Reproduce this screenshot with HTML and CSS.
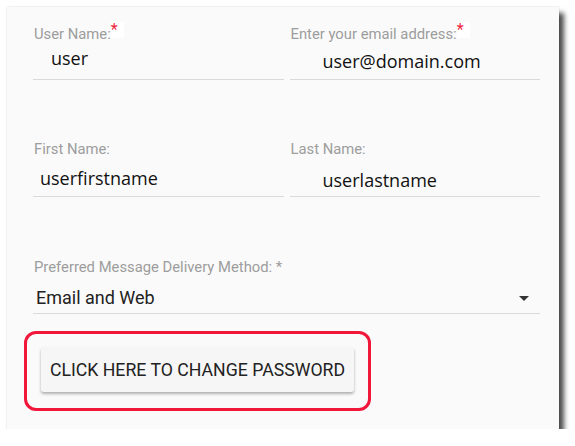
FILE: index.html
```html
<!DOCTYPE html>
<html lang="en">
<head>
    <meta charset="UTF-8">
    <title>Profile</title>
    <link rel="stylesheet" href="styles.css">
</head>
<body>
    <!-- 프로필 폼 패널 -->
    <div class="panel">
        <div class="grid">
            <div class="field">
                <label class="lbl">User Name:<span class="req">*</span></label>
                <div class="val v-user">user</div>
            </div>
            <div class="field">
                <label class="lbl">Enter your email address:<span class="req">*</span></label>
                <div class="val v-mail">user@domain.com</div>
            </div>
            <div class="field row2">
                <label class="lbl">First Name:</label>
                <div class="val v-first">userfirstname</div>
            </div>
            <div class="field row2">
                <label class="lbl">Last Name:</label>
                <div class="val v-last">userlastname</div>
            </div>
        </div>

        <!-- 선택박스 -->
        <div class="field sel">
            <label class="lbl">Preferred Message Delivery Method: *</label>
            <div class="selrow">
                <span class="seltxt">Email and Web</span>
                <span class="caret"></span>
            </div>
        </div>

        <!-- 비밀번호 버튼 -->
        <div class="mark">
            <button class="btn">Click here to change password</button>
        </div>
    </div>
</body>
</html>
```

FILE: styles.css
```css
html,
body {
    margin: 0;
    padding: 0;
    background: #fff;
}

/* 패널 */
.panel {
    width: 552px;
    height: 422px;
    box-sizing: border-box;
    margin: 7px 0 0 7px;
    padding: 19px 19px 0 26px;
    background: #fafafa;
    box-shadow: 5px 6px 5px rgba(0, 0, 0, .7), 0 0 2px rgba(0, 0, 0, .15);
}

.grid {
    display: grid;
    grid-template-columns: 1fr 1fr;
    column-gap: 6px;
    row-gap: 61px;
}

.field {
    border-bottom: 1px solid #dadada;
}

/* 라벨 */
.lbl {
    display: block;
    padding-left: 1px;
    font: 14.8px/16px Roboto, sans-serif;
    color: #9d9d9d;
}

.req {
    display: inline-block;
    vertical-align: top;
    margin-top: -4px;
    padding-right: 6px;
    color: #f0263c;
    font-size: 16px;
    line-height: 16px;
    background: #fff;
}

/* 값 */
.val {
    font: 18px/24px "Open Sans", sans-serif;
    color: #111;
}

.v-user {
    padding: 4px 0 9px 18px;
}

.v-mail {
    padding: 7px 0 6px 33px;
}

.v-first {
    padding: 9px 0 6px 7px;
}

.v-last {
    padding: 11px 0 4px 33px;
}

/* 선택박스 */
.sel {
    margin-top: 62px;
}

.selrow {
    display: flex;
    align-items: center;
    padding: 11px 11px 3px 3px;
}

.seltxt {
    flex: 1;
    font: 18px/24px Roboto, sans-serif;
    color: #222;
}

.caret {
    width: 0;
    height: 0;
    border-left: 5px solid transparent;
    border-right: 5px solid transparent;
    border-top: 5px solid #333;
}

/* 빨간 강조 테두리 */
.mark {
    width: 347px;
    box-sizing: border-box;
    margin: 17px 0 0 -9px;
    padding: 13px 14px 16px 14px;
    border: 3px solid #f0173b;
    border-radius: 12px;
}

.btn {
    display: block;
    width: 313px;
    height: 45px;
    padding: 0;
    border: 0;
    border-radius: 3px;
    background: #f6f6f6;
    box-shadow: 0 2px 3px rgba(0, 0, 0, .3);
    font: 17.7px Roboto, sans-serif;
    text-transform: uppercase;
    color: #222;
}
```
